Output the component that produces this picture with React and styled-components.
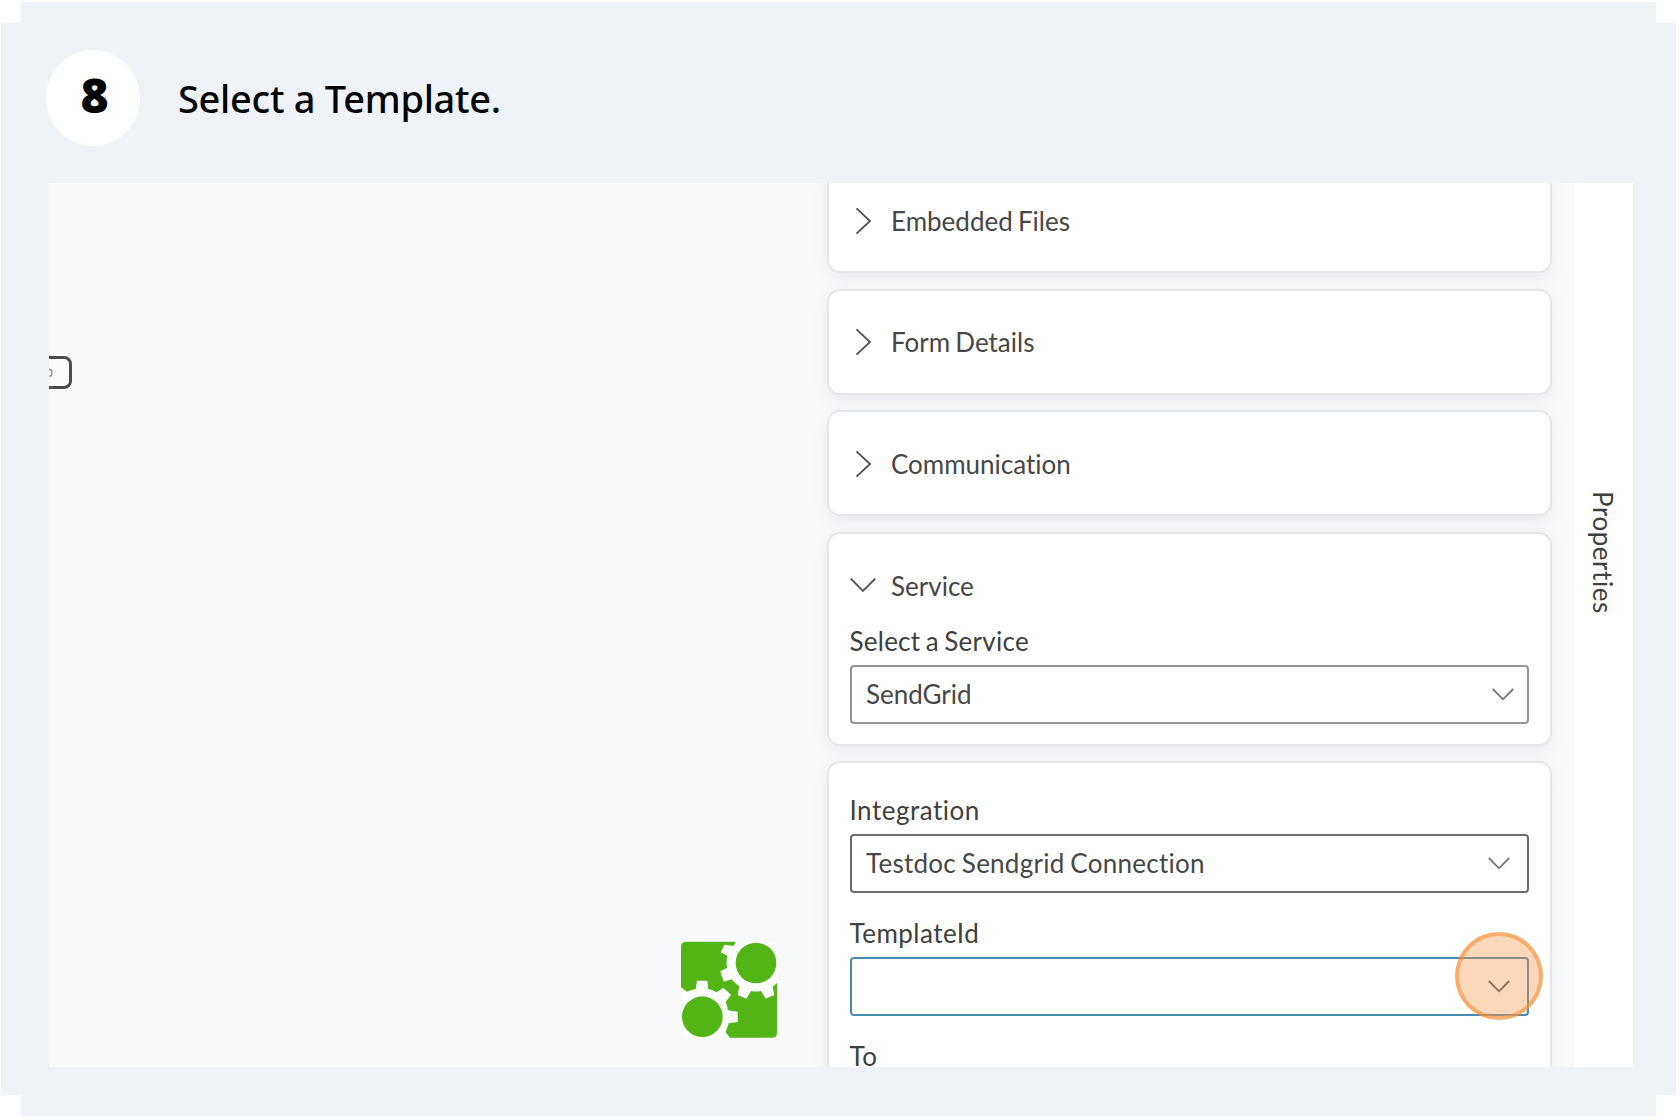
import React from 'react';
import styled, { createGlobalStyle } from 'styled-components';

const GlobalStyle = createGlobalStyle`
  *, *::before, *::after { box-sizing: border-box; }
  body { margin: 0; background: #fff; }
`;

const Page = styled.div`
  width: 1680px;
  height: 1120px;
  padding: 2px 4px 4px 1px;
  overflow: hidden;
  background: #fff;
  font-family: Lato, 'Liberation Sans', sans-serif;
  font-variant-ligatures: none;
  color: #474747;
`;

const Frame = styled.main`
  display: flex;
  flex-direction: column;
  height: 1114px;
  padding: 0 43px 49px 48px;
  background: #eff3f8;
  clip-path: polygon(
    20px 0, calc(100% - 20px) 0, calc(100% - 20px) 21px, 100% 21px,
    100% calc(100% - 21px), calc(100% - 20px) calc(100% - 21px), calc(100% - 20px) 100%,
    20px 100%, 20px calc(100% - 21px), 0 calc(100% - 21px), 0 21px, 20px 21px
  );
`;

const StepHeader = styled.header`
  display: flex;
  align-items: flex-start;
  gap: 38px;
  height: 181px;
  padding-top: 48px;
  margin-left: -3px;
  flex: none;
`;

const StepNumber = styled.div`
  display: flex;
  align-items: center;
  justify-content: center;
  width: 94px;
  height: 96px;
  padding: 0 0 7px 3px;
  border-radius: 50%;
  background: #fff;
  color: #000;
  font: 800 48px/1 'Open Sans', sans-serif;
`;

const StepTitle = styled.h1`
  margin: 23px 0 0;
  color: #050505;
  font: 500 38px/50px 'Noto Sans', sans-serif;
  letter-spacing: -0.3px;
  white-space: nowrap;
`;

const Shot = styled.section`
  display: flex;
  flex: 1;
  min-height: 0;
  overflow: hidden;
  background: #f9fafc;
`;

const Canvas = styled.div`
  position: relative;
  flex: 1;
`;

const CanvasNode = styled.div`
  position: absolute;
  left: -40px;
  top: 173px;
  width: 63px;
  height: 33px;
  border: 3px solid #4c4c4c;
  border-radius: 8px;
  background: #fcfcfd;
`;

const NodeGlyph = styled.svg`
  position: absolute;
  right: 16px;
  top: 9px;
`;

const GearLogo = styled.svg`
  position: absolute;
  left: 631px;
  top: 757.5px;
`;

const Panel = styled.div`
  display: flex;
  flex-direction: column;
  gap: 15.67px;
  width: 769px;
  padding: 0 22px;
  margin-top: -16px;
  flex: none;
`;

const Card = styled.section`
  padding: 0 21px ${(p) => p.$bottom}px 20.5px;
  border: 2px solid #e4e6e8;
  border-radius: 13px;
  background: #fff;
  box-shadow: 0 6px 16px rgba(60, 66, 75, 0.09);
  flex: none;
`;

const CardHeader = styled.div`
  display: flex;
  align-items: center;
  gap: 15.5px;
  height: 66.6px;
  padding-top: 36.6px;
  font-size: 26px;
  line-height: 30px;
  word-spacing: -1.5px;
`;

const Marker = styled.svg`
  flex: none;
`;

const Fields = styled.div`
  display: flex;
  flex-direction: column;
  gap: 25px;
  padding-top: ${(p) => p.$top}px;
`;

const Field = styled.div`
  display: flex;
  flex-direction: column;
  gap: 9px;
`;

const Label = styled.label`
  font-size: 26px;
  line-height: 30px;
  letter-spacing: ${(p) => p.$track}px;
  word-spacing: -1.5px;
  color: #404040;
`;

const Select = styled.div`
  position: relative;
  display: flex;
  align-items: center;
  justify-content: space-between;
  height: 59px;
  padding: 0 ${(p) => p.$inset}px 0 14.5px;
  border: 2px solid ${(p) => p.$line};
  border-radius: 4px;
  background: #fff;
  font-size: 26px;
  line-height: 30px;
  word-spacing: -1px;
`;

const Value = styled.span`
  letter-spacing: ${(p) => p.$track}px;
`;

const ClickSpot = styled.span`
  position: absolute;
  right: -16px;
  top: -27px;
  width: 88px;
  height: 88px;
  border: 4px solid rgba(247, 144, 56, 0.62);
  border-radius: 50%;
  background: rgba(250, 150, 70, 0.37);
`;

const Rail = styled.aside`
  display: flex;
  justify-content: center;
  width: 59px;
  padding-top: 308px;
  background: #fff;
  flex: none;
`;

const RailLabel = styled.span`
  writing-mode: vertical-rl;
  font-size: 26px;
  line-height: 30px;
  height: 130px;
  letter-spacing: 0.55px;
  transform: translateX(-1px);
  color: #404040;
`;

const Chevron = ({ open }) => (
  <Marker width="26" height="28" viewBox="0 0 26 28" fill="none" stroke="#505050" strokeWidth="1.8">
    <path d={open ? 'M0.7 6.6 L13 19 L25.3 6.6' : 'M6.5 1.3 L20 14 L6.5 26.7'} />
  </Marker>
);

const Caret = ({ color }) => (
  <svg width="22" height="13" viewBox="0 0 22 13" fill="none" stroke={color} strokeWidth="1.8">
    <path d="M0.8 1 L11 11.3 L21.2 1" />
  </svg>
);

const Section = ({ title }) => (
  <Card $bottom={35.4}>
    <CardHeader><Chevron />{title}</CardHeader>
  </Card>
);

const SelectField = ({ label, value, line, inset = 17, track = 0, valueTrack = 0, caret = '#777', children }) => (
  <Field>
    <Label $track={track}>{label}</Label>
    <Select $line={line} $inset={inset}>
      <Value $track={valueTrack}>{value}</Value>
      <Caret color={caret} />
      {children}
    </Select>
  </Field>
);

export default function App() {
  return (
    <Page>
      <GlobalStyle />
      <Frame>
        <StepHeader>
          <StepNumber>8</StepNumber>
          <StepTitle>Select a Template.</StepTitle>
        </StepHeader>
        <Shot>
          <Canvas>
            <CanvasNode>
              <NodeGlyph width="9" height="10" viewBox="0 0 9 10" fill="none" stroke="#8a8a8a" strokeWidth="1.4">
                <path d="M3 1.5 H6 Q8 1.8 8 4.5 Q8 7.5 5.5 8.5" />
              </NodeGlyph>
            </CanvasNode>
            <GearLogo width="98" height="98" viewBox="60 64 294 294">
              <rect x="62" y="66" width="290" height="290" rx="14" fill="#fdfefe" />
              <g fill="#53b416">
                <path d="M78 66 H227 L221 79 L193 75 L182 98 L202 108 Q198 126 201 145 L181 155 L191 186 L215 179 Q225 192 238 200 L233 226 L259 237 L273 214 Q288 217 303 214 L317 237 L343 226 L338 202 L351 189 V340 Q351 354 337 354 H210 L197 338 L206 311 L233 307 V276 L204 272 Q202 259 197 247 L213 225 L190 204 L170 218 Q158 211 145 208 L142 183 H111 L107 208 Q93 210 81 216 L63 203 V81 Q63 66 78 66 Z" />
                <circle cx="288" cy="130" r="61" />
                <circle cx="127" cy="291" r="61" />
              </g>
            </GearLogo>
          </Canvas>
          <Panel>
            <Section title="Embedded Files" />
            <Section title="Form Details" />
            <Section title="Communication" />
            <Card $bottom={20}>
              <CardHeader><Chevron open />Service</CardHeader>
              <Fields $top={25.2}>
                <SelectField label="Select a Service" value="SendGrid" line="#959595" inset={13} track={0.25} />
              </Fields>
            </Card>
            <Card $bottom={20}>
              <Fields $top={31.5}>
                <SelectField label="Integration" value="Testdoc Sendgrid Connection" line="#6c6c6c" track={0.5} valueTrack={0.25} />
                <SelectField label="TemplateId" value="" line="#4a8aae" caret="#555" track={0.5}>
                  <ClickSpot />
                </SelectField>
                <SelectField label="To" value="" line="#6c6c6c" track={0.5} />
              </Fields>
            </Card>
          </Panel>
          <Rail>
            <RailLabel>Properties</RailLabel>
          </Rail>
        </Shot>
      </Frame>
    </Page>
  );
}
